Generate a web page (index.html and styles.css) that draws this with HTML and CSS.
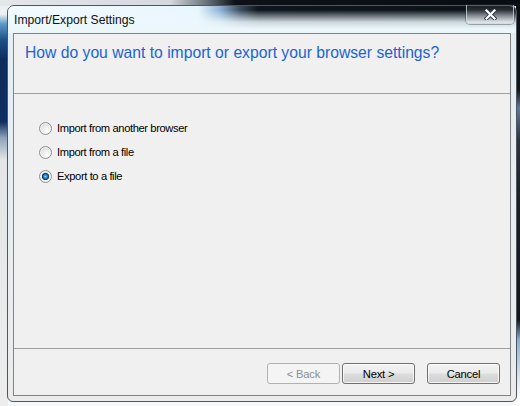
FILE: index.html
```html
<!DOCTYPE html>
<html lang="en">
<head>
<meta charset="utf-8">
<title>Import/Export Settings</title>
<link rel="stylesheet" href="styles.css">
</head>
<body>
<div class="desktop">
  <div class="window">
    <div class="titlebar">
      <span class="title">Import/Export Settings</span>
      <button class="close" aria-label="Close">
        <svg width="13" height="11" viewBox="0 0 13 11" aria-hidden="true">
          <path d="M2.5 1.5 L10.5 9.5 M10.5 1.5 L2.5 9.5" stroke="#2a3440" stroke-width="4" stroke-linecap="square" fill="none"/>
          <path d="M2.5 1.5 L10.5 9.5 M10.5 1.5 L2.5 9.5" stroke="#ffffff" stroke-width="2.2" stroke-linecap="square" fill="none"/>
        </svg>
      </button>
    </div>
    <div class="client">
      <div class="header">
        <h1 class="instruction">How do you want to import or export your browser settings?</h1>
      </div>
      <div class="content">
        <label class="option"><input type="radio" name="mode"><span>Import from another browser</span></label>
        <label class="option"><input type="radio" name="mode"><span>Import from a file</span></label>
        <label class="option"><input type="radio" name="mode" checked><span>Export to a file</span></label>
      </div>
      <div class="footer">
        <button class="btn back" disabled>&lt; Back</button>
        <button class="btn next">Next &gt;</button>
        <button class="btn">Cancel</button>
      </div>
    </div>
  </div>
</div>
</body>
</html>
```
FILE: styles.css
```css
* { box-sizing: border-box; }

html, body {
  margin: 0;
  padding: 0;
  width: 520px;
  height: 406px;
  overflow: hidden;
}

body {
  font-family: "Liberation Sans", Arial, sans-serif;
  background-color: #f6f7f8;
  background-image:
    linear-gradient(to right, #e3e7ea 0, #d3d9dd 170px, #6d7680 205px, #0c1217 235px, #090d11 100%),
    linear-gradient(to bottom, #e6ebee 0, #eef2f5 14px, #5a98c8 24px, #1d5089 40px, #0d2b5c 60px, #0f2e61 122px, #8fa3b8 138px, #e3e5e6 160px, #ededed 100%),
    linear-gradient(to bottom, #0a0e12 0, #10161c 90px, #587c9e 108px, #2a3440 140px, #1a2026 200px, #12171c 320px, #86b0d8 340px, #dde8f2 380px, #ffffff 400px);
  background-size: 100% 6px, 8px 100%, 4px 100%;
  background-position: 0 0, 0 0, 100% 0;
  background-repeat: no-repeat;
}

.desktop {
  padding: 5px 0 0 7px;
}

.window {
  width: 510px;
  height: 397px;
  border: 1px solid #50565c;
  border-radius: 7px 7px 6px 6px;
  background: linear-gradient(to bottom, #e4eef4 0, #e8edf0 60%, #ebebeb 100%);
  box-shadow: inset 0 1px 0 #b9bec3;
  display: flex;
  flex-direction: column;
  padding: 0 5px 5px 5px;
}

.titlebar {
  height: 27px;
  margin: 0 -5px;
  padding: 0 2px 0 6px;
  display: flex;
  align-items: flex-start;
  justify-content: space-between;
  border-radius: 6px 6px 0 0;
  background-image:
    linear-gradient(to bottom, rgba(236, 248, 253, 0) 0, rgba(236, 248, 253, 0) 4px, rgba(236, 248, 253, 0.85) 16px, #ecf7fc 23px),
    linear-gradient(to right, #f2fbff 0, #e8f6fd 190px, #8fb2d4 212px, #3b4c5e 232px, #0d151d 250px, #0b1218 100%);
}

.title {
  font-size: 12.2px;
  line-height: 14px;
  color: #101010;
  padding-top: 7px;
}

.close {
  width: 48px;
  height: 19px;
  margin-top: -1px;
  padding: 0;
  border: 1px solid rgba(210, 220, 230, 0.75);
  border-top: none;
  border-radius: 0 0 4px 4px;
  box-shadow: 0 0 0 1px rgba(30, 40, 50, 0.35);
  background: linear-gradient(to bottom, rgba(255, 255, 255, 0.05), rgba(255, 255, 255, 0.3));
  display: flex;
  align-items: center;
  justify-content: center;
}

.close svg { display: block; }

.client {
  flex: 1;
  border: 1px solid #7f8386;
  background: #f0f0f0;
  display: flex;
  flex-direction: column;
}

.header {
  height: 60px;
  border-bottom: 1px solid #a0a0a0;
  padding: 10px 0 0 11px;
}

.instruction {
  margin: 0;
  font-weight: normal;
  font-size: 15.7px;
  line-height: 18px;
  color: #1a64d4;
}

.content {
  flex: 1;
  padding: 22px 0 0 25px;
  display: flex;
  flex-direction: column;
}

.option {
  height: 24px;
  display: flex;
  align-items: center;
  gap: 5px;
  font-size: 11.2px;
  letter-spacing: -0.4px;
  color: #000;
}

.option input {
  appearance: none;
  -webkit-appearance: none;
  margin: 0;
  width: 13px;
  height: 13px;
  border-radius: 50%;
  border: 1px solid #8d8f91;
  background: radial-gradient(circle at 62% 68%, #ffffff 0, #f1f1f1 30%, #dcdcdc 70%, #c9c9c9 100%);
  box-shadow: inset 0 0 0 1px #f7f7f7;
}

.option input:checked {
  background:
    radial-gradient(circle at 50% 50%, #8fdcff 0, #2e92da 1.4px, #15579a 2.6px, #0b2e58 3.4px, rgba(11, 46, 88, 0) 3.8px),
    radial-gradient(circle at 62% 68%, #ffffff 0, #f1f1f1 30%, #dcdcdc 70%, #c9c9c9 100%);
}

.footer {
  height: 47px;
  border-top: 1px solid #a0a0a0;
  padding: 14px 10px 0 0;
  display: flex;
  justify-content: flex-end;
  align-items: flex-start;
}

.btn {
  width: 73px;
  height: 21px;
  padding: 0;
  border: 1px solid #707070;
  border-radius: 3px;
  background: linear-gradient(to bottom, #f3f3f3 0, #ebebeb 48%, #dddddd 52%, #cfcfcf 100%);
  box-shadow: inset 0 0 0 1px rgba(255, 255, 255, 0.75);
  font-family: "Liberation Sans", Arial, sans-serif;
  font-size: 11.2px;
  letter-spacing: -0.2px;
  color: #000;
}

.btn.back {
  margin-right: 2px;
  border-color: #adb2b5;
  background: #f4f4f4;
  box-shadow: none;
  color: #8e8f8f;
}

.btn.next {
  margin-right: 12px;
}
```
